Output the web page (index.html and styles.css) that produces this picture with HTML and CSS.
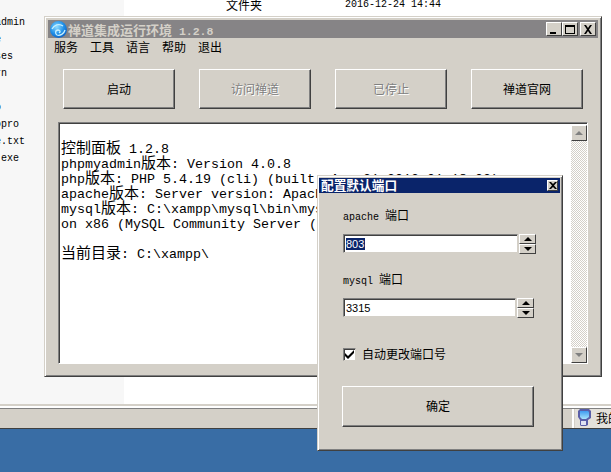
FILE: index.html
```html
<!DOCTYPE html>
<html lang="zh-CN">
<head>
    <meta charset="UTF-8">
    <title>禅道集成运行环境</title>
    <link rel="stylesheet" href="styles.css">
</head>
<body>
    <div class="desktop">
        <div class="explorer">
            <div class="sidebar">
                <div class="file">phpmyadmin</div>
                <div class="file">apache</div>
                <div class="file">licenses</div>
                <div class="file">pattern</div>
                <div class="file">mysql</div>
                <div class="file">zentao</div>
                <div class="file">zentaopro</div>
                <div class="file">readme.txt</div>
                <div class="file">xampp.exe</div>
            </div>
            <div class="details">
                <div class="detailRow"><span class="kind">文件夹</span><span class="date">2016-12-24 14:44</span></div>
                <div class="detailRow"><span class="kind">文件夹</span></div>
            </div>
        </div>
        <div class="statusbar">
            <div class="statusPanel">
                <svg class="pcIcon" width="13" height="17" viewBox="0 0 13 17">
                    <defs>
                        <linearGradient id="screen" x1="0" y1="0" x2="0" y2="1">
                            <stop offset="0" stop-color="#3f9bf0"/>
                            <stop offset="1" stop-color="#a8e4fb"/>
                        </linearGradient>
                    </defs>
                    <path d="M2 0h9l2 2v7l-3 2v5l-2 1H3l-1-1v-5L0 8V2z" fill="#5a5fa8"/>
                    <path d="M2 2h8l1 1v5l-3 2H4L2 8z" fill="url(#screen)"/>
                    <rect x="3" y="12" width="5" height="4" fill="#dfe3f2"/>
                </svg>
                <span class="statusText">我的电脑</span>
            </div>
        </div>
        <div class="taskbar"></div>

        <div class="window mainWin">
            <div class="titlebar">
                <svg class="appIcon" width="17" height="17" viewBox="0 0 17 17">
                    <defs>
                        <radialGradient id="ball" cx="0.4" cy="0.35" r="0.7">
                            <stop offset="0" stop-color="#8fdcff"/>
                            <stop offset="0.6" stop-color="#1f8fe8"/>
                            <stop offset="1" stop-color="#0f5fc0"/>
                        </radialGradient>
                    </defs>
                    <circle cx="8.500" cy="8.500" r="8.500" fill="url(#ball)"/>
                    <path d="M2 8c2-4 7-6 11-3M15 9c-1 4-5 6-8 5-2-1-2-5 1-5 2 0 3 2 1 3" fill="none" stroke="#c8f0ff" stroke-width="1.300"/>
                </svg>
                <span class="titleText">禅道集成运行环境<span class="titleVer"> 1.2.8</span></span>
                <div class="winBtns">
                    <div class="winBtn"><svg width="10" height="9" viewBox="0 0 10 9"><rect x="1" y="7" width="6" height="2"/></svg></div>
                    <div class="winBtn"><svg width="10" height="9" viewBox="0 0 10 9"><path d="M0 0h10v9H0zM1 2v6h8V2z" fill-rule="evenodd"/></svg></div>
                    <div class="winBtn closeBtn"><svg width="10" height="9" viewBox="0 0 10 9"><path d="M1 0h2l2 3 2-3h2L6 4.500 9 9H7L5 6 3 9H1l3-4.500z"/></svg></div>
                </div>
            </div>
            <div class="menu">
                <span>服务</span><span>工具</span><span>语言</span><span>帮助</span><span>退出</span>
            </div>
            <div class="toolbar">
                <div class="btn">启动</div>
                <div class="btn disabled">访问禅道</div>
                <div class="btn disabled">已停止</div>
                <div class="btn">禅道官网</div>
            </div>
            <div class="console">
                <div class="consoleText">
                    <div class="line"><span class="zh">控制面板</span> 1.2.8</div>
                    <div class="line">phpmyadmin<span class="zh">版本</span>: Version 4.0.8</div>
                    <div class="line">php<span class="zh">版本</span>: PHP 5.4.19 (cli) (built: Aug 21 2013 01:18:02)</div>
                    <div class="line">apache<span class="zh">版本</span>: Server version: Apache/2.4.4 (Win32)</div>
                    <div class="line">mysql<span class="zh">版本</span>: C:\xampp\mysql\bin\mysql.exe Ver 14.14 Distrib</div>
                    <div class="line">on x86 (MySQL Community Server (GPL))</div>
                    <div class="line"></div>
                    <div class="line"><span class="zh">当前目录</span>: C:\xampp\</div>
                </div>
                <div class="scrollbar">
                    <div class="scrollBtn"><i class="arrowUp"></i></div>
                    <div class="scrollTrack"></div>
                    <div class="scrollBtn"><i class="arrowDown"></i></div>
                </div>
            </div>
        </div>

        <div class="window dialog">
            <div class="dlgTitle">
                <span>配置默认端口</span>
                <div class="dlgClose"><svg width="8" height="7" viewBox="0 0 8 7"><path d="M0 0h2l2 2 2-2h2L5 3.500 8 7H6L4 5 2 7H0l3-3.500z"/></svg></div>
            </div>
            <div class="dlgBody">
                <div class="fieldLabel">apache <span class="zh12">端口</span></div>
                <div class="spinRow wide">
                    <div class="field"><span class="selected">803</span></div>
                    <div class="spin"><div class="spinBtn"><i class="spinUp"></i></div><div class="spinBtn"><i class="spinDown"></i></div></div>
                </div>
                <div class="fieldLabel second">mysql <span class="zh12">端口</span></div>
                <div class="spinRow">
                    <div class="field">3315</div>
                    <div class="spin"><div class="spinBtn"><i class="spinUp"></i></div><div class="spinBtn"><i class="spinDown"></i></div></div>
                </div>
                <div class="checkRow">
                    <div class="checkbox"><svg width="9" height="9" viewBox="0 0 9 9"><path d="M0 3l3 3 6-6v3L3 9 0 6z"/></svg></div>
                    <span class="checkText">自动更改端口号</span>
                </div>
                <div class="btn okBtn">确定</div>
            </div>
        </div>
    </div>
</body>
</html>
```

FILE: styles.css
```css
html, body {
    margin: 0;
    padding: 0;
    height: 100%;
}
body {
    background: #396da5;
    font-family: "Noto Sans CJK SC", sans-serif;
    font-size: 12px;
    color: #000;
    overflow: hidden;
}

.desktop {
    position: relative;
    width: 611px;
    height: 472px;
    overflow: hidden;
    display: flex;
    flex-direction: column;
}

/* explorer behind the windows */
.explorer {
    display: flex;
    height: 404px;
    background: #fff;
    font-family: "Liberation Mono", monospace;
    font-size: 10px;
}
.sidebar {
    width: 124px;
    padding-top: 14px;
    background: #f7f7f7;
    overflow: hidden;
    box-sizing: border-box;
}
.file {
    height: 17px;
    line-height: 17px;
    margin-left: -35px;
    white-space: nowrap;
}
.details {
    padding-left: 102px;
    margin-top: -4px;
}
.detailRow {
    display: flex;
    height: 17px;
    line-height: 17px;
}
.kind {
    width: 119px;
    font-family: "Noto Sans CJK SC", sans-serif;
    font-size: 12px;
}

.statusbar {
    height: 25px;
    box-sizing: border-box;
    display: flex;
    justify-content: flex-end;
    background: #d4d0c8;
    border-top: 2px solid #d4d0c8;
    box-shadow: inset 0 2px #fff, inset 0 3px #808080, inset 0 -1px #fff;
    padding-top: 3px;
}
.statusPanel {
    width: 39px;
    box-sizing: border-box;
    display: flex;
    align-items: center;
    gap: 5px;
    padding-left: 4px;
    padding-bottom: 2px;
    margin-bottom: 1px;
    border-left: 2px solid #fff;
    background: #e4e1db;
    box-shadow: inset 1px 0 #d4d0c8;
    white-space: nowrap;
    overflow: hidden;
}
.pcIcon {
    flex: none;
}
.taskbar {
    flex: 1;
    background: #396da5;
    border-top: 1px solid #404040;
    margin-top: -1px;
}

/* windows */
.window {
    position: absolute;
    box-sizing: border-box;
    background: #d4d0c8;
    border: 1px solid;
    border-color: #d4d0c8 #404040 #404040 #d4d0c8;
    box-shadow: inset 1px 1px #fff, inset -1px -1px #808080;
}
.mainWin {
    left: 44px;
    top: 16px;
    width: 558px;
    height: 361px;
    padding: 3px;
}
.titlebar {
    height: 18px;
    display: flex;
    align-items: center;
    background: #868486;
    padding-left: 2px;
    color: #d4d0c8;
}
.appIcon {
    flex: none;
}
.titleText {
    margin-left: 1px;
    font-size: 13px;
    font-weight: bold;
    white-space: pre;
}
.titleVer {
    font-family: "Liberation Mono", monospace;
    font-size: 11.5px;
}
.winBtns {
    margin-left: auto;
    margin-right: 2px;
    display: flex;
}
.winBtn {
    width: 16px;
    height: 14px;
    box-sizing: border-box;
    display: flex;
    align-items: center;
    justify-content: center;
    background: #d4d0c8;
    border: 1px solid;
    border-color: #fff #404040 #404040 #fff;
}
.closeBtn {
    margin-left: 2px;
}

.menu {
    height: 18px;
    line-height: 18px;
    display: flex;
    gap: 12px;
    padding-left: 6px;
}

.toolbar {
    display: flex;
    justify-content: space-between;
    margin: 13px 15px 0;
}
.btn {
    width: 112px;
    height: 40px;
    box-sizing: border-box;
    padding-bottom: 2px;
    display: flex;
    align-items: center;
    justify-content: center;
    background: #d4d0c8;
    border: 1px solid;
    border-color: #fff #404040 #404040 #fff;
    box-shadow: inset -1px -1px #808080;
}
.disabled {
    color: #808080;
    text-shadow: 1px 1px #fff;
}

.console {
    display: flex;
    height: 242px;
    margin: 13px 10px 0;
    box-sizing: border-box;
    background: #fff;
    border: 1px solid;
    border-color: #808080 #fff #fff #808080;
    box-shadow: inset 1px 1px #404040;
    padding: 2px 0 0 2px;
}
.consoleText {
    flex: 1;
    min-width: 0;
    padding-top: 14px;
    overflow: hidden;
    font-family: "Liberation Mono", monospace;
    font-size: 13.33px;
}
.line {
    height: 15px;
    line-height: 15px;
    white-space: pre;
}
/* keeps the baseline the same on lines with no chinese text */
.line::before {
    content: "\200b";
    font-family: "Noto Sans CJK SC", sans-serif;
    font-size: 15px;
}
.zh {
    font-family: "Noto Sans CJK SC", sans-serif;
    font-size: 15px;
}
.scrollbar {
    flex: none;
    width: 16px;
    display: flex;
    flex-direction: column;
}
.scrollTrack {
    flex: 1;
    background: conic-gradient(#fff 25%, #d4d0c8 0 50%, #fff 0 75%, #d4d0c8 0);
    background-size: 2px 2px;
}
.scrollBtn {
    height: 16px;
    box-sizing: border-box;
    display: flex;
    align-items: center;
    justify-content: center;
    background: #d4d0c8;
    border: 1px solid;
    border-color: #fff #404040 #404040 #fff;
}
.arrowUp, .arrowDown {
    width: 0;
    height: 0;
    border: 4px solid transparent;
}
.arrowUp {
    border-bottom-color: #808080;
    margin-top: -4px;
}
.arrowDown {
    border-top-color: #808080;
    margin-top: 4px;
}

/* port dialog */
.dialog {
    left: 317px;
    top: 175px;
    width: 246px;
    height: 276px;
    padding: 2px 2px 0 1px;
}
.dlgTitle {
    height: 15px;
    box-sizing: border-box;
    display: flex;
    align-items: center;
    justify-content: space-between;
    padding: 0 2px 2px 2px;
    background: #0a246a;
    color: #fff;
    font-size: 12.7px;
    font-weight: bold;
}
.dlgClose {
    width: 11px;
    height: 11px;
    margin-bottom: -2px;
    box-sizing: border-box;
    display: flex;
    align-items: center;
    justify-content: center;
    background: #d4d0c8;
    border: 1px solid;
    border-color: #fff #404040 #404040 #fff;
}
.dlgBody {
    padding: 14px 0 0 24px;
}
.fieldLabel {
    height: 16px;
    line-height: 16px;
    margin-bottom: 11px;
    font-family: "Liberation Mono", monospace;
    font-size: 10px;
}
.second {
    margin-top: 17px;
}
.zh12 {
    font-family: "Noto Sans CJK SC", sans-serif;
    font-size: 12px;
}
.spinRow {
    display: flex;
    width: 191px;
    height: 20px;
    gap: 1px;
}
.wide {
    width: 193px;
}
.field {
    flex: 1;
    height: 19px;
    box-sizing: border-box;
    display: flex;
    align-items: center;
    padding-left: 2px;
    background: #fff;
    border: 1px solid;
    border-color: #808080 #d4d0c8 #d4d0c8 #808080;
    box-shadow: inset 1px 1px #404040;
    font-family: "Liberation Sans", sans-serif;
    font-size: 11px;
}
.selected {
    background: #0a246a;
    color: #fff;
    padding-right: 1px;
    line-height: 12px;
}
.spin {
    flex: none;
    width: 17px;
    display: flex;
    flex-direction: column;
}
.spinBtn {
    height: 10px;
    box-sizing: border-box;
    display: flex;
    align-items: center;
    justify-content: center;
    background: #d4d0c8;
    border: 1px solid;
    border-color: #fff #404040 #404040 #fff;
}
.spinUp, .spinDown {
    width: 0;
    height: 0;
    border: 4px solid transparent;
}
.spinUp {
    border-bottom-color: #000;
    margin-top: -4px;
}
.spinDown {
    border-top-color: #000;
    margin-top: 4px;
}

.checkRow {
    display: flex;
    align-items: center;
    gap: 6px;
    height: 13px;
    margin-top: 30px;
}
.checkText {
    margin-top: -2px;
}
.checkbox {
    width: 13px;
    height: 13px;
    box-sizing: border-box;
    display: flex;
    align-items: center;
    justify-content: center;
    background: #fff;
    border: 1px solid;
    border-color: #808080 #d4d0c8 #d4d0c8 #808080;
    box-shadow: inset 1px 1px #404040;
}
.okBtn {
    width: 192px;
    height: 41px;
    margin: 25px 0 0 -1px;
}
```
